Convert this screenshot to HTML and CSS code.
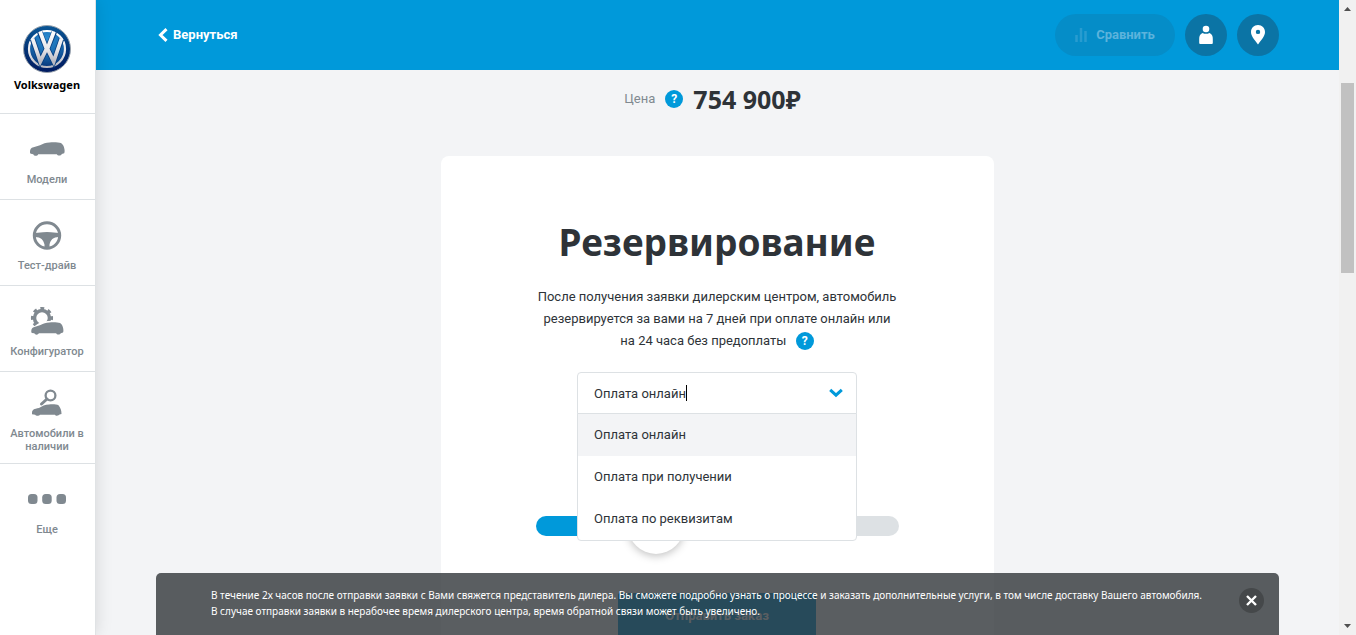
FILE: index.html
```html
<!DOCTYPE html>
<html lang="ru">
<head>
<meta charset="utf-8">
<title>Volkswagen — Резервирование</title>
<meta name="viewport" content="width=device-width, initial-scale=1">
<link rel="stylesheet" href="styles.css">
</head>
<body>
<svg class="defs" aria-hidden="true">
  <defs>
    <linearGradient id="ring" x1="0" y1="0" x2="0" y2="1"><stop offset="0" stop-color="#0a5796"/><stop offset=".5" stop-color="#043476"/><stop offset="1" stop-color="#001a60"/></linearGradient>
    <radialGradient id="core" cx=".5" cy=".2" r=".8"><stop offset="0" stop-color="#2b8bd0"/><stop offset=".6" stop-color="#1766ac"/><stop offset="1" stop-color="#083579"/></radialGradient>
    <linearGradient id="chrome" x1="0" y1="0" x2="0" y2="1"><stop offset="0" stop-color="#ffffff"/><stop offset=".6" stop-color="#e6e6ea"/><stop offset="1" stop-color="#b9b9c2"/></linearGradient>
  </defs>
  <symbol id="car" viewBox="0 0 35 14">
    <path d="M0 10.500C0 7 1 6 3.500 5.300L10 3.300C13 1.500 16 .700 19.500.500C23 0 28.500.200 31 1.100C33 2.500 34 4.500 34.300 6.500C34.800 8.500 34.700 10.500 34.200 11.300L31.800 12C31 14 27.500 14 26.800 12.200H8.200C7.500 14.200 4 14.200 3.300 12.200L.800 11.800Q0 11.500 0 10.500Z"/>
  </symbol>
</svg>

<nav class="sidebar" aria-label="Основное меню">
  <a class="brand" href="#">
    <svg width="48" height="48" viewBox="0 0 48 48" aria-hidden="true">
      <circle cx="24" cy="24" r="23.500" fill="url(#ring)" stroke="#9aa3ad"/>
      <circle cx="24" cy="24" r="18" fill="url(#core)" stroke="url(#chrome)" stroke-width="2.200"/>
      <path d="M16.500 6.500L22.700 21.500H25.300L31.500 6.500M9.500 14L17.300 36.500L23 25H25L30.700 36.500L38.500 14" fill="none" stroke="#0a3f80" stroke-width="5.400"/>
      <path d="M17 6.500L22.700 21.500H25.300L31 6.500M9.500 13.500L17.300 36.500L23 25H25L30.700 36.500L38.500 13.500" fill="none" stroke="url(#chrome)" stroke-width="3.800"/>
    </svg>
    <span>Volkswagen</span>
  </a>
  <a class="item" href="#">
    <svg class="icon" width="35" height="40" viewBox="0 0 35 40" aria-hidden="true"><use href="#car" y="14" width="35" height="14"/></svg>
    <span>Модели</span>
  </a>
  <a class="item" href="#">
    <svg class="icon" width="30" height="40" viewBox="0 0 30 40" aria-hidden="true">
      <circle cx="15" cy="21.500" r="12.700" fill="none" stroke="currentColor" stroke-width="3"/>
      <path d="M3 19L11 18.200Q15 17.600 19 18.200L27 19V23C21 23 18.500 26 17.500 30.500V34H12.500V30.500C11.500 26 9 23 3 23Z"/>
    </svg>
    <span>Тест-драйв</span>
  </a>
  <a class="item" href="#">
    <svg class="icon" width="34" height="40" viewBox="0 0 34 40" aria-hidden="true">
      <circle cx="12" cy="18" r="7.500" fill="none" stroke="currentColor" stroke-width="3.500"/>
      <circle cx="12" cy="18" r="9.600" fill="none" stroke="currentColor" stroke-width="3" stroke-dasharray="3.700 3.840" transform="rotate(-11 12 18)"/>
      <path d="M0 28C5 27 7 23 13 21.500Q20 20.500 30 21V32H0Z" fill="#fff"/>
      <use href="#car" x="1" y="22" width="33" height="13"/>
    </svg>
    <span>Конфигуратор</span>
  </a>
  <a class="item" href="#">
    <svg class="icon" width="30" height="40" viewBox="0 0 30 40" aria-hidden="true">
      <circle cx="18.500" cy="13.500" r="4.900" fill="none" stroke="currentColor" stroke-width="2.300"/>
      <path d="M15 17L9.500 22" stroke="currentColor" stroke-width="3" stroke-linecap="round"/>
      <path d="M0 31C0 27.500 2 27 7 26C10 24 13 22.400 17 22.400C21 22.200 25 22.300 26.500 23.200C28.500 26 29.500 28 29.500 32L27.500 32.500C26.500 34 23.500 34 23 32.700H8C7 34 4 34 3.200 32.700L0 32.300Z"/>
    </svg>
    <span>Автомобили в наличии</span>
  </a>
  <a class="item" href="#">
    <svg class="icon" width="38" height="40" viewBox="0 0 38 40" aria-hidden="true"><rect y="16" width="9.500" height="10" rx="3.500"/><rect x="14.200" y="16" width="9.500" height="10" rx="3.500"/><rect x="28.500" y="16" width="9.500" height="10" rx="3.500"/></svg>
    <span>Еще</span>
  </a>
</nav>

<div class="page">
  <header class="topbar">
    <a class="back" href="#">
      <svg width="10" height="14" viewBox="0 0 10 14" aria-hidden="true"><path d="M8.500 1.200L2.500 7L8.500 12.800" fill="none" stroke="#fff" stroke-width="3"/></svg>
      Вернуться
    </a>
    <div class="tools">
      <button class="compare" type="button" disabled>
        <svg width="12" height="14" viewBox="0 0 12 14" aria-hidden="true"><path d="M1.500 14V7M6 14V0M10.500 14V3" stroke="currentColor" stroke-width="2.500" opacity=".4"/></svg>
        Сравнить
      </button>
      <button class="round" type="button" aria-label="Личный кабинет">
        <svg width="14" height="20" viewBox="0 0 14 20" aria-hidden="true"><circle cx="7" cy="4" r="3.300"/><path d="M3.500 8Q7 9.700 10.500 8Q14 9.500 13.800 14V18Q13.800 19 12.800 19H1.200Q.200 19 .200 18V14Q0 9.500 3.500 8Z"/></svg>
      </button>
      <button class="round" type="button" aria-label="Дилеры">
        <svg width="14" height="20" viewBox="0 0 14 20" aria-hidden="true"><path fill-rule="evenodd" d="M7 0C11 0 14 3 14 7C14 11 11 14 7 19.500C3 14 0 11 0 7C0 3 3 0 7 0ZM7 4.700A2.200 2.200 0 1 0 7 9.100A2.200 2.200 0 1 0 7 4.700Z"/></svg>
      </button>
    </div>
  </header>

  <main class="content">
    <div class="price">
      <span class="price-label">Цена</span>
      <button class="help" type="button" aria-label="Подробнее о цене">?</button>
      <strong>754 900₽</strong>
    </div>
    <form class="card">
      <h1>Резервирование</h1>
      <p class="lead">После получения заявки дилерским центром, автомобиль<br>резервируется за вами на 7 дней при оплате онлайн или<br>на 24 часа без предоплаты <button class="help" type="button" aria-label="Подробнее о резервировании">?</button></p>
      <div class="combo">
        <input class="combo-input" type="text" role="combobox" aria-label="Способ оплаты" aria-expanded="true" aria-controls="payment" value="Оплата онлайн">
        <span class="caret"></span>
        <svg class="chevron" width="14" height="10" viewBox="0 0 14 10" aria-hidden="true"><path d="M1.200 1.800L7 7.200L12.800 1.800" fill="none" stroke="#0099da" stroke-width="3"/></svg>
        <ul class="options" id="payment" role="listbox">
          <li role="option" aria-selected="true">Оплата онлайн</li>
          <li role="option">Оплата при получении</li>
          <li role="option">Оплата по реквизитам</li>
        </ul>
      </div>
      <input class="slider" type="range" min="0" max="100" value="30" aria-label="Шаг оформления">
      <button class="submit" type="submit">Отправить заказ</button>
    </form>
  </main>

  <aside class="notice">
    <p>В течение 2х часов после отправки заявки с Вами свяжется представитель дилера. Вы сможете подробно узнать о процессе и заказать дополнительные услуги, в том числе доставку Вашего автомобиля.<br>В случае отправки заявки в нерабочее время дилерского центра, время обратной связи может быть увеличено.</p>
    <button class="close" type="button" aria-label="Закрыть">
      <svg width="11" height="11" viewBox="0 0 11 11" aria-hidden="true"><path d="M1 1L10 10M10 1L1 10" stroke="#fff" stroke-width="2.400"/></svg>
    </button>
  </aside>
</div>

<div class="scrollbar" aria-hidden="true">
  <svg width="17" height="17" viewBox="0 0 17 17"><path d="M5 11L8.500 7L12 11Z"/></svg>
  <div class="scroll-track"><div class="thumb"></div></div>
  <svg width="17" height="17" viewBox="0 0 17 17"><path d="M5 6L8.500 10L12 6Z"/></svg>
</div>
</body>
</html>
```

FILE: styles.css
```css
* { box-sizing: border-box; }
body {
  margin: 0;
  display: flex;
  height: 100vh;
  overflow: hidden;
  background: #f3f4f6;
  color: #2e3338;
  font: 13px/22px Roboto, "Noto Sans", sans-serif;
}
a { color: inherit; text-decoration: none; }
button, input { font: inherit; }
button { border: 0; padding: 0; cursor: pointer; }
svg { fill: currentColor; flex: none; }
.defs { position: absolute; width: 0; height: 0; }

.sidebar {
  position: relative;
  z-index: 2;
  flex: none;
  width: 96px;
  background: #fff;
  border-right: 1px solid #e0e3e5;
  box-shadow: 0 0 16px rgba(0, 0, 0, .13);
  color: #808990;
}
.brand, .item {
  display: flex;
  flex-direction: column;
  align-items: center;
  border-bottom: 1px solid #dde1e4;
  text-align: center;
}
.brand {
  height: 114px;
  padding: 25px 1px 0 0;
  gap: 4px;
  color: #000;
  font: 700 11px/16px "Noto Sans", sans-serif;
}
.item {
  min-height: 86px;
  padding: 14px 5px 12px 4px;
  gap: 5px;
  font-size: 11px;
  line-height: 13px;
  font-weight: 500;
}
.item:nth-child(5) { padding-top: 10px; padding-bottom: 10px; }
.item:last-child { border: 0; }

.page {
  position: relative;
  flex: 1;
  min-width: 0;
  overflow: hidden;
}
.topbar {
  display: flex;
  align-items: center;
  justify-content: space-between;
  height: 70px;
  padding: 0 60px;
  background: #0099da;
  color: #fff;
  font-weight: 700;
}
.back { display: flex; align-items: center; gap: 5px; padding-left: 2px; }
.tools { display: flex; gap: 10px; }
.compare {
  display: flex;
  align-items: center;
  justify-content: center;
  gap: 9px;
  width: 120px;
  height: 42px;
  border-radius: 21px;
  background: #058dc8;
  color: #5cb3dc;
}
.round {
  display: grid;
  place-items: center;
  width: 42px;
  height: 42px;
  border-radius: 50%;
  background: #0b74a5;
  color: #fff;
}

.content { display: flex; flex-direction: column; align-items: center; }
.price {
  display: flex;
  align-items: center;
  gap: 10px;
  height: 58px;
  margin-right: 10px;
}
.price-label { color: #808990; }
.price strong { font: 700 25px/36px "Noto Sans", sans-serif; }
.help {
  width: 18px;
  height: 18px;
  border-radius: 50%;
  background: #0099da;
  color: #fff;
  font-size: 12px;
  font-weight: 700;
  line-height: 18px;
}
.card {
  display: flex;
  flex-direction: column;
  align-items: center;
  width: 553px;
  margin-top: 28px;
  padding: 56px 41px 56px 40px;
  border-radius: 8px;
  background: #fff;
}
h1 { margin: 0; font: 700 37px/60px "Noto Sans", sans-serif; }
.lead { margin: 14px 0 20px; text-align: center; white-space: nowrap; }
.lead .help { margin-left: 6px; }
.combo { position: relative; width: 280px; }
.combo-input {
  display: block;
  width: 100%;
  height: 42px;
  padding: 0 40px 0 16px;
  border: 1px solid #dde1e4;
  border-radius: 4px 4px 0 0;
  background: #fff;
  color: inherit;
  outline: 0;
}
.caret {
  position: absolute;
  left: 109px;
  top: 13px;
  width: 1px;
  height: 16px;
  background: #000;
}
.chevron { position: absolute; right: 14px; top: 16px; }
.options {
  position: absolute;
  z-index: 1;
  top: 41px;
  left: 0;
  right: 0;
  margin: 0;
  padding: 0;
  border: 1px solid #dde1e4;
  border-radius: 0 0 4px 4px;
  background: #fff;
  list-style: none;
}
.options li { padding: 10px 16px; }
.options li[aria-selected="true"] { background: #f3f4f6; }
.slider {
  appearance: none;
  width: 363px;
  height: 56px;
  margin: 84px 0 39px;
  background: transparent;
}
.slider::-webkit-slider-runnable-track {
  height: 20px;
  border-radius: 10px;
  background: linear-gradient(90deg, #0099da 33%, #dde1e4 33%);
}
.slider::-webkit-slider-thumb {
  appearance: none;
  width: 56px;
  height: 56px;
  margin-top: -18px;
  border-radius: 50%;
  background: #fff;
  box-shadow: 0 2px 8px rgba(0, 0, 0, .25);
}
.submit {
  width: 198px;
  height: 46px;
  border-radius: 2px;
  background: #0099da;
  color: #fff;
  font-weight: 700;
}

.notice {
  position: absolute;
  z-index: 3;
  left: 60px;
  right: 60px;
  bottom: 0;
  display: flex;
  align-items: flex-start;
  justify-content: space-between;
  padding: 14px 15px 16px 55px;
  border-radius: 5px 5px 0 0;
  background: rgba(49, 54, 57, .8);
  color: #fff;
  font: 10px/16px "Noto Sans", sans-serif;
}
.notice p { margin: 0; white-space: nowrap; }
.close {
  display: grid;
  place-items: center;
  flex: none;
  width: 25px;
  height: 25px;
  margin-top: 1px;
  border-radius: 50%;
  background: #45484a;
}

.scrollbar {
  display: flex;
  flex-direction: column;
  flex: none;
  width: 17px;
  background: #f1f1f1;
  color: #505050;
}
.scroll-track { flex: 1; padding: 66px 2px 0; }
.thumb { height: 190px; background: #c1c1c1; }
```
